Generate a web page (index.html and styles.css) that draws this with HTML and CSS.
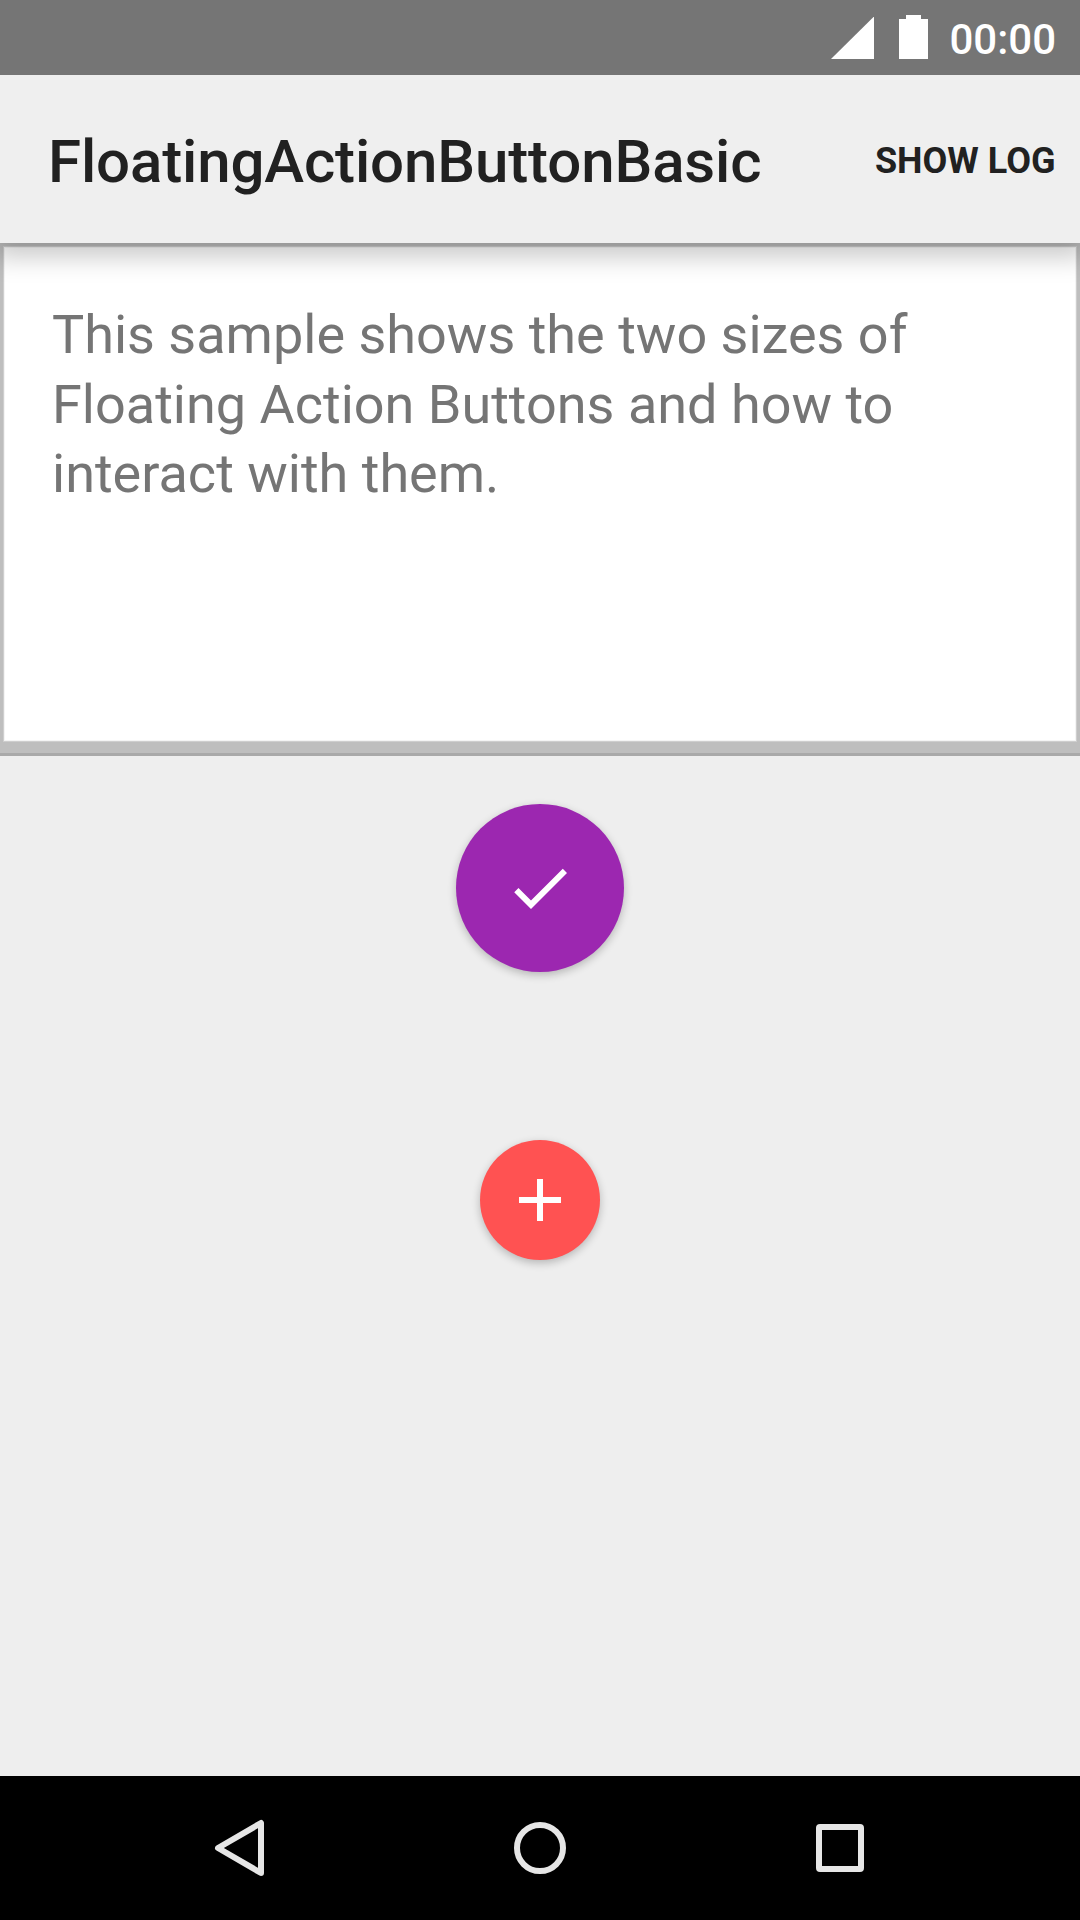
FILE: index.html
```
<!DOCTYPE html>
<html lang="en">
<head>
<meta charset="utf-8">
<title>FloatingActionButtonBasic</title>
<link rel="stylesheet" href="styles.css">
</head>
<body>
<div class="screen">
  <div class="status-bar">
    <svg class="signal" viewBox="0 0 43 42"><path d="M43 -.5V42H0Z"/></svg>
    <svg class="battery" viewBox="0 0 29 44"><path d="M7 0H22V4H29V44H0V4H7Z"/></svg>
    <span class="clock">00:00</span>
  </div>
  <header class="app-bar">
    <h1 class="title">FloatingActionButtonBasic</h1>
    <button class="action">SHOW LOG</button>
  </header>
  <section class="card">
    <p class="intro">This sample shows the two sizes of<br>Floating Action Buttons and how to<br>interact with them.</p>
  </section>
  <main class="content">
    <button class="fab fab-large" aria-label="Done"><svg class="icon" viewBox="0 0 24 24"><path d="M9 16.17L4.83 12l-1.42 1.41L9 19 21 7l-1.41-1.41z"/></svg></button>
    <button class="fab fab-small" aria-label="Add"><svg class="icon" viewBox="0 0 24 24"><path d="M19 13h-6v6h-2v-6H5v-2h6V5h2v6h6v2z"/></svg></button>
  </main>
  <nav class="nav-bar">
    <svg class="nav-icon" viewBox="0 0 60 60"><path d="M51 5V55L8 30Z"/></svg>
    <svg class="nav-icon" viewBox="0 0 60 60"><circle cx="30" cy="30" r="23"/></svg>
    <svg class="nav-icon" viewBox="0 0 60 60"><rect x="9" y="9" width="42" height="42" rx="1"/></svg>
  </nav>
</div>
</body>
</html>
```

FILE: styles.css
```
* { box-sizing: border-box; }
body { margin: 0; font-family: Roboto, sans-serif; }
button { border: 0; padding: 0; background: none; font-family: inherit; }
.screen { width: 1080px; height: 1920px; display: flex; flex-direction: column; background: #eee; }
.status-bar { height: 75px; background: #757575; display: flex; align-items: flex-start; justify-content: flex-end; padding-right: 24px; color: #fff; }
.status-bar svg { fill: #fff; }
.signal { width: 43px; height: 42px; margin: 17px 25px 0 0; }
.battery { width: 29px; height: 44px; margin: 15px 20px 0 0; }
.clock { width: 108px; font-size: 42px; font-weight: 500; line-height: 75px; padding-top: 2px; text-align: right; }
.app-bar { position: relative; height: 168px; background: #efefef; display: flex; align-items: center; justify-content: space-between; padding: 4px 24.5px 0 48px; box-shadow: 0 8px 24px 6px rgba(0,0,0,.21); clip-path: inset(0 0 -40px 0); color: #212121; }
.title { margin: 0; font-size: 60px; font-weight: 500; letter-spacing: -.14px; }
.action { font-size: 36px; font-weight: 700; color: #212121; }
.card { height: 510px; background: #fff; border: solid #bebebe; border-width: 3px 3px 11px; box-shadow: inset 0 0 0 1px #cecece, inset 0 0 0 2px #f4f4f4; padding: 54px 49px; }
.intro { margin: 0; color: #757575; font-size: 54px; line-height: 69.6px; }
.content { flex: 1; display: flex; flex-direction: column; align-items: center; padding-top: 48px; border-top: 3px solid #a9a9a9; }
.fab { display: grid; place-items: center; border-radius: 50%; box-shadow: 0 3px 8px rgba(0,0,0,.24); }
.fab-large { width: 168px; height: 168px; background: #9c27b0; }
.fab-small { width: 120px; height: 120px; background: #ff5252; margin-top: 168px; }
.icon { width: 72px; height: 72px; fill: #fff; }
.nav-bar { height: 144px; background: #000; display: flex; align-items: center; justify-content: center; gap: 240px; }
.nav-icon { width: 60px; height: 60px; fill: none; stroke: #e6e6e6; stroke-width: 6; stroke-linejoin: round; }
```
